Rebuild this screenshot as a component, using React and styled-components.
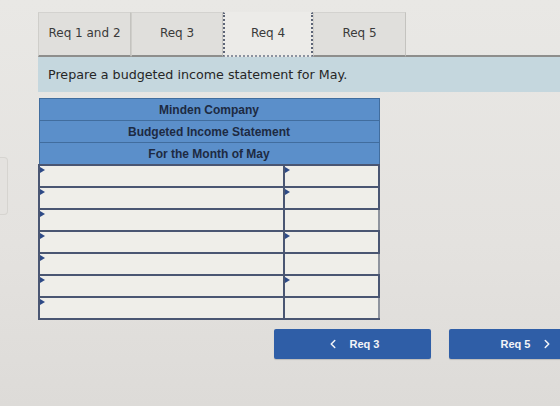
import React from "react";
import styled, { createGlobalStyle } from "styled-components";
import { ChevronLeft, ChevronRight } from "lucide-react";

const Global = createGlobalStyle`
  html, body {
    margin: 0;
    padding: 0;
    overflow: hidden;
  }
  body {
    width: 560px;
    height: 406px;
    background: linear-gradient(180deg, #e9e8e5 0%, #e4e2df 60%, #dddbd8 100%);
  }
`;

const Page = styled.div`
  display: flex;
  width: 560px;
  height: 406px;
  overflow: hidden;
`;

const Rail = styled.div`
  flex: 0 0 38px;
  display: flex;
  flex-direction: column;
`;

const Stub = styled.div`
  margin-top: 157px;
  width: 7px;
  height: 56px;
  border: 1px solid #d6d4d0;
  border-left: none;
  border-radius: 0 4px 4px 0;
  background: #e4e2df;
`;

const Main = styled.div`
  flex: 1;
  display: flex;
  flex-direction: column;
  padding-top: 12px;
  min-width: 0;
`;

const TabBar = styled.div`
  display: flex;
  height: 45px;
`;

const Tab = styled.div`
  flex: 0 0 ${(p) => p.$w}px;
  box-sizing: border-box;
  display: flex;
  align-items: center;
  justify-content: center;
  font-family: "DejaVu Sans", Verdana, sans-serif;
  font-size: 12px;
  color: #3a3a3a;
  background: ${(p) => (p.$active ? "#ecebe8" : "#e0dfdc")};
  border-top: 1px solid ${(p) => (p.$active ? "transparent" : "#d3d2cf")};
  border-left: ${(p) => (p.$active ? "2px dotted #5d6577" : "1px solid #cfceca")};
  border-right: ${(p) => (p.$active ? "2px dotted #5d6577" : "1px solid #c4c3bf")};
  border-bottom: ${(p) => (p.$active ? "2px dotted #8d93a0" : "2px solid #8e8e8c")};
  padding-bottom: 2px;
`;

const TabFill = styled.div`
  flex: 1;
  border-bottom: 2px solid #8e8e8c;
`;

const Prompt = styled.div`
  height: 35px;
  display: flex;
  align-items: center;
  padding-left: 10px;
  background: #c5d7de;
  font-family: "DejaVu Sans", Verdana, sans-serif;
  font-size: 12.7px;
  color: #262626;
`;

const Sheet = styled.table`
  margin-top: 6px;
  width: 340px;
  border-collapse: collapse;
  table-layout: fixed;
`;

const HeadCell = styled.th`
  height: 21px;
  padding: 0;
  background: #5b8fca;
  border: 1px solid #416d9e;
  font-family: "Liberation Sans", Arial, sans-serif;
  font-weight: bold;
  font-size: 12px;
  color: #1d2a42;
  text-align: center;
`;

const Cell = styled.td`
  position: relative;
  height: 20px;
  padding: 0;
  background: #efeee9;
  border: 2px solid #4a5672;
  border-right-color: ${(p) => (p.$soft ? "#8f949e" : "#4a5672")};
`;

const Marker = styled.span`
  position: absolute;
  left: 0;
  top: 1px;
  width: 0;
  height: 0;
  border-top: 3px solid transparent;
  border-bottom: 3px solid transparent;
  border-left: 5px solid #2e4a86;
`;

const NavRow = styled.div`
  display: flex;
  gap: 18px;
  margin-top: 9px;
  margin-left: 236px;
`;

const NavButton = styled.div`
  flex: 0 0 157px;
  height: 30px;
  display: flex;
  align-items: center;
  justify-content: center;
  gap: 10px;
  background: #2f5ea7;
  border-radius: 2px;
  box-shadow: 0 1px 1px rgba(0, 0, 0, 0.15);
  font-family: "Liberation Sans", Arial, sans-serif;
  font-weight: bold;
  font-size: 11px;
  color: #f2f4f8;
`;

const tabs = [
  { label: "Req 1 and 2", w: 93 },
  { label: "Req 3", w: 92 },
  { label: "Req 4", w: 90, active: true },
  { label: "Req 5", w: 93 },
];

// which rows carry an entry marker in the amount column
const rows = [true, true, false, true, false, true, false];

export default function App() {
  return (
    <>
      <Global />
      <Page>
        <Rail>
          <Stub />
        </Rail>
        <Main>
          <TabBar>
            {tabs.map((t) => (
              <Tab key={t.label} $w={t.w} $active={t.active}>
                {t.label}
              </Tab>
            ))}
            <TabFill />
          </TabBar>
          <Prompt>Prepare a budgeted income statement for May.</Prompt>
          <Sheet>
            <colgroup>
              <col style={{ width: 245 }} />
              <col style={{ width: 95 }} />
            </colgroup>
            <thead>
              <tr><HeadCell colSpan={2}>Minden Company</HeadCell></tr>
              <tr><HeadCell colSpan={2}>Budgeted Income Statement</HeadCell></tr>
              <tr><HeadCell colSpan={2}>For the Month of May</HeadCell></tr>
            </thead>
            <tbody>
              {rows.map((amt, i) => (
                <tr key={i}>
                  <Cell>
                    <Marker />
                  </Cell>
                  <Cell $soft={!amt}>{amt && <Marker />}</Cell>
                </tr>
              ))}
            </tbody>
          </Sheet>
          <NavRow>
            <NavButton>
              <ChevronLeft size={14} strokeWidth={2.6} />
              <span>Req 3</span>
            </NavButton>
            <NavButton>
              <span>Req 5</span>
              <ChevronRight size={14} strokeWidth={2.6} />
            </NavButton>
          </NavRow>
        </Main>
      </Page>
    </>
  );
}
